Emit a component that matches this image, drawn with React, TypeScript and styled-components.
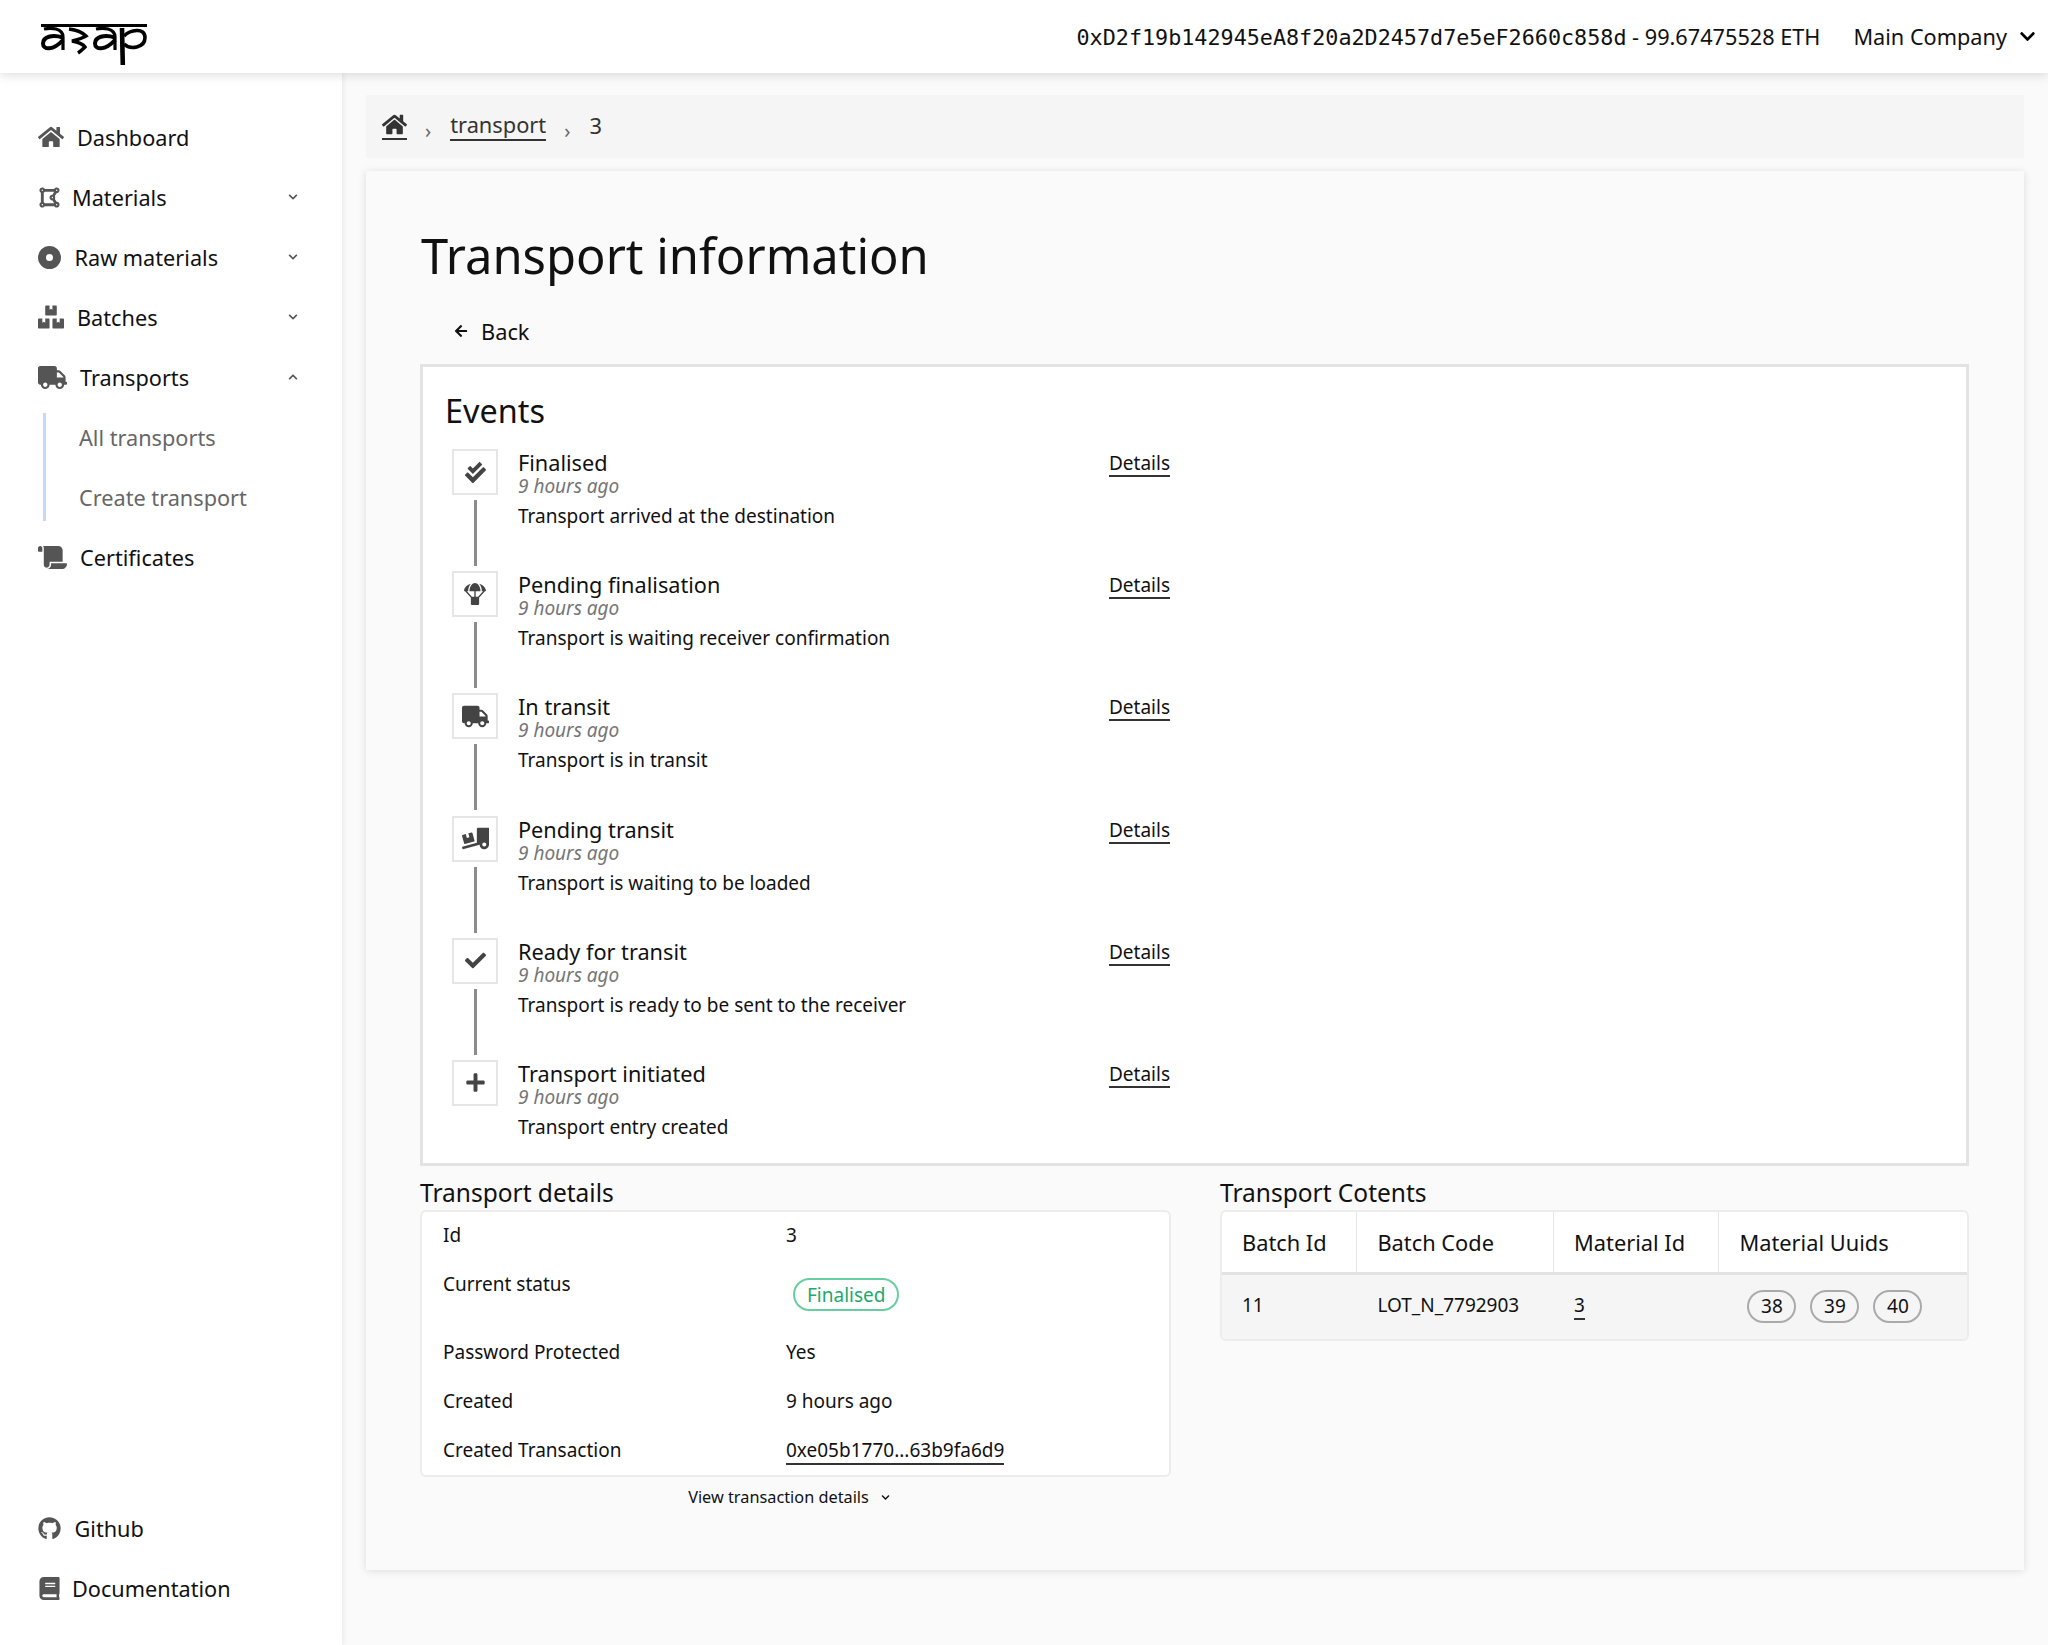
import React from 'react'
import styled, { createGlobalStyle } from 'styled-components'
import {
  FaHome,
  FaDrawPolygon,
  FaBoxes,
  FaTruck,
  FaScroll,
  FaGithub,
  FaBook,
  FaCheckDouble,
  FaParachuteBox,
  FaTruckLoading,
  FaCheck,
  FaPlus,
  FaArrowLeft,
  FaChevronDown,
  FaChevronUp,
} from 'react-icons/fa'

const GlobalStyle = createGlobalStyle`
  html, body { margin: 0; padding: 0; }
  body {
    background: #fafafa;
    color: #111;
    font-family: "Noto Sans", sans-serif;
  }
  a { color: inherit; text-decoration: none; }
`

const Page = styled.div`
  width: 2048px;
  height: 1645px;
  display: flex;
  flex-direction: column;
  overflow: hidden;
`

const Header = styled.header`
  height: 73px;
  flex: none;
  display: flex;
  align-items: center;
  justify-content: space-between;
  padding: 0 12px 0 40px;
  background: #fff;
  box-shadow: 0 2px 10px rgba(0, 0, 0, 0.14);
  position: relative;
  z-index: 2;
`

const LogoMark = styled.svg`
  margin-top: 16px;
`

const Account = styled.div`
  display: flex;
  align-items: center;
  gap: 33px;
  font-size: 21.7px;
`

const Address = styled.span`
  font-family: "DejaVu Sans Mono", monospace;
  font-size: 21.75px;
`

const Company = styled.span`
  display: flex;
  align-items: center;
  gap: 12px;
`

const Body = styled.div`
  flex: 1;
  display: flex;
  min-height: 0;
`

const Sidebar = styled.nav`
  width: 342px;
  flex: none;
  background: #fff;
  box-shadow: 1px 0 6px rgba(0, 0, 0, 0.08);
  display: flex;
  flex-direction: column;
  justify-content: space-between;
  padding: 34px 0 27px;
  box-sizing: border-box;
`

const NavGroup = styled.div`
  display: flex;
  flex-direction: column;
`

const NavItem = styled.a<{ $gap: number }>`
  height: 60px;
  display: flex;
  align-items: center;
  gap: ${(p) => p.$gap}px;
  padding: 0 44px 0 38px;
  font-size: 21.7px;
  color: #111;
  svg:first-child { color: #555; flex: none; }
`

const Chevron = styled.span<{ $open?: boolean }>`
  margin-left: auto;
  display: flex;
  color: ${(p) => (p.$open ? '#333' : '#888')};
`

const SubNav = styled.div`
  margin: 6px 0 6px 43px;
  height: 108px;
  border-left: 3px solid #c5d9f7;
  display: flex;
  flex-direction: column;
  justify-content: center;
`

const SubItem = styled.a`
  height: 60px;
  flex: none;
  display: flex;
  align-items: center;
  padding-left: 33px;
  font-size: 21.7px;
  color: #666;
`

const Main = styled.main`
  flex: 1;
  padding: 22px 24px 0;
  min-width: 0;
`

const Breadcrumbs = styled.div`
  height: 63px;
  padding: 0 16px 2px;
  box-sizing: border-box;
  background: #f5f5f5;
  display: flex;
  align-items: center;
  font-size: 21.8px;
  color: #333;
`

const HomeLink = styled.a`
  display: flex;
  width: 25px;
  justify-content: center;
  border-bottom: 2px solid #333;
  padding-bottom: 1px;
`

const CrumbLink = styled.a`
  border-bottom: 2px solid #333;
  line-height: 28px;
`

const CrumbSep = styled.span`
  margin: 9px 19px 0 18px;
  font-size: 20px;
  color: #666;
`

const Card = styled.section`
  margin-top: 13px;
  height: 1399px;
  background: #fafafa;
  box-shadow: 0 1px 8px rgba(0, 0, 0, 0.12);
  padding: 51px 55px 0 54px;
  box-sizing: border-box;
`

const Title = styled.h1`
  margin: 0 0 0 1px;
  font-size: 48.9px;
  font-weight: 400;
  line-height: 66px;
`

const BackLink = styled.a`
  display: inline-flex;
  align-items: center;
  gap: 13px;
  height: 38px;
  margin: 24px 0 0 34px;
  font-size: 21.8px;
  vertical-align: top;
`

const EventsBox = styled.div`
  margin-top: 14px;
  height: 802px;
  border: 3px solid #e3e3e3;
  background: #fff;
  padding: 21px 21px 0 22px;
  box-sizing: border-box;
`

const EventsTitle = styled.h2`
  margin: 0;
  font-size: 32.4px;
  font-weight: 400;
  line-height: 44px;
`

const EventList = styled.div`
  margin-top: 17px;
`

const EventRow = styled.div`
  height: 122.2px;
  display: flex;
  margin-left: 6px;
`

const EventRail = styled.div`
  width: 48px;
  flex: none;
  display: flex;
  flex-direction: column;
  align-items: center;
  gap: 5px;
`

const EventIcon = styled.div`
  width: 46px;
  height: 46px;
  flex: none;
  border: 2px solid #e6e6e6;
  box-sizing: border-box;
  background: #fff;
  color: #444;
  display: flex;
  align-items: center;
  justify-content: center;
`

const RailLine = styled.div`
  width: 3px;
  height: 66px;
  background: #8c8c8c;
`

const EventText = styled.div`
  width: 591px;
  margin-left: 19px;
`

const EventName = styled.div`
  font-size: 21.7px;
  line-height: 26px;
  margin-top: 1px;
`

const EventTime = styled.div`
  font-size: 19px;
  font-style: italic;
  color: #757575;
  line-height: 22px;
  margin-top: -1px;
`

const EventDesc = styled.div`
  font-size: 19px;
  line-height: 26px;
  margin-top: 6px;
`

const DetailsLink = styled.a`
  align-self: flex-start;
  font-size: 19px;
  line-height: 24px;
  border-bottom: 2px solid #333;
  margin-top: 2px;
`

const Columns = styled.div`
  margin-top: 11px;
  display: grid;
  grid-template-columns: 751px 749px;
  justify-content: space-between;
`

const SectionTitle = styled.h3`
  margin: 0;
  padding-bottom: 2px;
  font-size: 24.5px;
  font-weight: 400;
  line-height: 31px;
`

const InfoBox = styled.div`
  height: 267px;
  border: 2px solid #ececec;
  border-radius: 6px;
  background: #fff;
  box-sizing: border-box;
  padding: 10px 21px 0;
`

const InfoRow = styled.div<{ $tall?: boolean }>`
  height: ${(p) => (p.$tall ? 68 : 49)}px;
  display: grid;
  grid-template-columns: 343px 1fr;
  font-size: 19px;
  line-height: 26px;
`

const StatusPill = styled.span`
  display: inline-block;
  margin: 7px 0 0 7px;
  padding: 0 12px;
  height: 33px;
  line-height: 31px;
  box-sizing: border-box;
  border: 2px solid #68cea0;
  border-radius: 17px;
  color: #1ea86c;
`

const TxLink = styled.a`
  border-bottom: 2px solid #333;
  line-height: 25px;
`

const MoreLink = styled.a`
  display: flex;
  align-items: center;
  justify-content: center;
  gap: 12px;
  margin-top: 8px;
  padding-right: 13px;
  font-size: 16.3px;
  line-height: 24px;
`

const ContentsTable = styled.table`
  width: 100%;
  border-collapse: separate;
  border-spacing: 0;
  border: 2px solid #ececec;
  border-radius: 6px;
  overflow: hidden;
  font-size: 19px;
`

const Th = styled.th<{ $w: number }>`
  width: ${(p) => p.$w}px;
  height: 63px;
  padding: 0 0 0 20px;
  box-sizing: border-box;
  background: #fff;
  text-align: left;
  font-size: 21.8px;
  font-weight: 400;
  border-bottom: 3px solid #e2e2e2;
  border-right: 1px solid #e6e6e6;
  &:last-child { border-right: none; }
`

const Td = styled.td`
  height: 64px;
  box-sizing: border-box;
  padding: 0 0 4px 20px;
  background: #f5f5f5;
`

const MaterialLink = styled.a`
  border-bottom: 2px solid #333;
`

const UuidList = styled.div`
  display: flex;
  gap: 14px;
  padding-left: 8px;
  margin-top: 2px;
`

const Uuid = styled.span`
  width: 49px;
  height: 33px;
  box-sizing: border-box;
  display: flex;
  align-items: center;
  justify-content: center;
  border: 2.5px solid #aaa;
  border-radius: 17px;
`

const events = [
  { name: 'Finalised', desc: 'Transport arrived at the destination', icon: <FaCheckDouble size={21} /> },
  { name: 'Pending finalisation', desc: 'Transport is waiting receiver confirmation', icon: <FaParachuteBox size={22} /> },
  { name: 'In transit', desc: 'Transport is in transit', icon: <FaTruck size={27} /> },
  { name: 'Pending transit', desc: 'Transport is waiting to be loaded', icon: <FaTruckLoading size={27} /> },
  { name: 'Ready for transit', desc: 'Transport is ready to be sent to the receiver', icon: <FaCheck size={21} /> },
  { name: 'Transport initiated', desc: 'Transport entry created', icon: <FaPlus size={21} /> },
]

const Logo = () => (
  <LogoMark width="108" height="46" viewBox="0 0 108 46" fill="none" stroke="#000">
    <path d="M1 3.5h106" strokeWidth="3" />
    <path d="M4 7c7-1.5 19-1 19 8v13" strokeWidth="3.2" />
    <path d="M23 15.5C12 12 3 15 3 21.5s10 7.5 20-3.5" strokeWidth="4" />
    <path d="M29 7c8 1 14 4 17 7-5 3-10 4-14 5 5 1 11 3 13 6-2 2-4 4-7 6" strokeWidth="3.4" />
    <g transform="translate(52 0)">
      <path d="M4 7c7-1.5 19-1 19 8v13" strokeWidth="3.2" />
      <path d="M23 15.5C12 12 3 15 3 21.5s10 7.5 20-3.5" strokeWidth="4" />
    </g>
    <path d="M82 6l.8 37" strokeWidth="4.6" />
    <path d="M84 14c6-6 21-9 21 1.5S90 28 84 22" strokeWidth="3.6" />
  </LogoMark>
)

const RawMaterialIcon = () => (
  <svg width="23" height="23" viewBox="0 0 23 23">
    <path
      fill="#555"
      fillRule="evenodd"
      d="M11.5 0a11.5 11.5 0 1 0 0 23 11.5 11.5 0 0 0 0-23zm0 8a3.5 3.5 0 1 1 0 7 3.5 3.5 0 0 1 0-7z"
    />
  </svg>
)

const Down = () => <FaChevronDown size={10} />

export default function App() {
  return (
    <Page>
      <GlobalStyle />
      <Header>
        <Logo />
        <Account>
          <span>
            <Address>0xD2f19b142945eA8f20a2D2457d7e5eF2660c858d</Address> - 99.67475528 ETH
          </span>
          <Company>
            Main Company <FaChevronDown size={17} color="#000" />
          </Company>
        </Account>
      </Header>
      <Body>
        <Sidebar>
          <NavGroup>
            <NavItem href="#" $gap={13}>
              <FaHome size={26} /> Dashboard
            </NavItem>
            <NavItem href="#" $gap={11}>
              <FaDrawPolygon size={23} /> Materials
              <Chevron><Down /></Chevron>
            </NavItem>
            <NavItem href="#" $gap={13.5}>
              <RawMaterialIcon /> Raw materials
              <Chevron><Down /></Chevron>
            </NavItem>
            <NavItem href="#" $gap={13}>
              <FaBoxes size={26} /> Batches
              <Chevron><Down /></Chevron>
            </NavItem>
            <NavItem href="#" $gap={13}>
              <FaTruck size={29} /> Transports
              <Chevron $open><FaChevronUp size={10} /></Chevron>
            </NavItem>
            <SubNav>
              <SubItem href="#">All transports</SubItem>
              <SubItem href="#">Create transport</SubItem>
            </SubNav>
            <NavItem href="#" $gap={13}>
              <FaScroll size={29} /> Certificates
            </NavItem>
          </NavGroup>
          <NavGroup>
            <NavItem href="#" $gap={13.5}>
              <FaGithub size={23} /> Github
            </NavItem>
            <NavItem href="#" $gap={11}>
              <FaBook size={23} /> Documentation
            </NavItem>
          </NavGroup>
        </Sidebar>
        <Main>
          <Breadcrumbs>
            <HomeLink href="#"><FaHome size={25} /></HomeLink>
            <CrumbSep>›</CrumbSep>
            <CrumbLink href="#">transport</CrumbLink>
            <CrumbSep>›</CrumbSep>
            3
          </Breadcrumbs>
          <Card>
            <Title>Transport information</Title>
            <BackLink href="#">
              <FaArrowLeft size={14} /> Back
            </BackLink>
            <EventsBox>
              <EventsTitle>Events</EventsTitle>
              <EventList>
                {events.map((ev, i) => (
                  <EventRow key={ev.name}>
                    <EventRail>
                      <EventIcon>{ev.icon}</EventIcon>
                      {i < events.length - 1 && <RailLine />}
                    </EventRail>
                    <EventText>
                      <EventName>{ev.name}</EventName>
                      <EventTime>9 hours ago</EventTime>
                      <EventDesc>{ev.desc}</EventDesc>
                    </EventText>
                    <DetailsLink href="#">Details</DetailsLink>
                  </EventRow>
                ))}
              </EventList>
            </EventsBox>
            <Columns>
              <div>
                <SectionTitle>Transport details</SectionTitle>
                <InfoBox>
                  <InfoRow><span>Id</span><span>3</span></InfoRow>
                  <InfoRow $tall>
                    <span>Current status</span>
                    <span><StatusPill>Finalised</StatusPill></span>
                  </InfoRow>
                  <InfoRow><span>Password Protected</span><span>Yes</span></InfoRow>
                  <InfoRow><span>Created</span><span>9 hours ago</span></InfoRow>
                  <InfoRow>
                    <span>Created Transaction</span>
                    <span><TxLink href="#">0xe05b1770...63b9fa6d9</TxLink></span>
                  </InfoRow>
                </InfoBox>
                <MoreLink href="#">
                  View transaction details <FaChevronDown size={9} />
                </MoreLink>
              </div>
              <div>
                <SectionTitle>Transport Cotents</SectionTitle>
                <ContentsTable>
                  <thead>
                    <tr>
                      <Th $w={136}>Batch Id</Th>
                      <Th $w={197}>Batch Code</Th>
                      <Th $w={166}>Material Id</Th>
                      <Th $w={248}>Material Uuids</Th>
                    </tr>
                  </thead>
                  <tbody>
                    <tr>
                      <Td>11</Td>
                      <Td>LOT_N_7792903</Td>
                      <Td><MaterialLink href="#">3</MaterialLink></Td>
                      <Td>
                        <UuidList>
                          <Uuid>38</Uuid>
                          <Uuid>39</Uuid>
                          <Uuid>40</Uuid>
                        </UuidList>
                      </Td>
                    </tr>
                  </tbody>
                </ContentsTable>
              </div>
            </Columns>
          </Card>
        </Main>
      </Body>
    </Page>
  )
}
